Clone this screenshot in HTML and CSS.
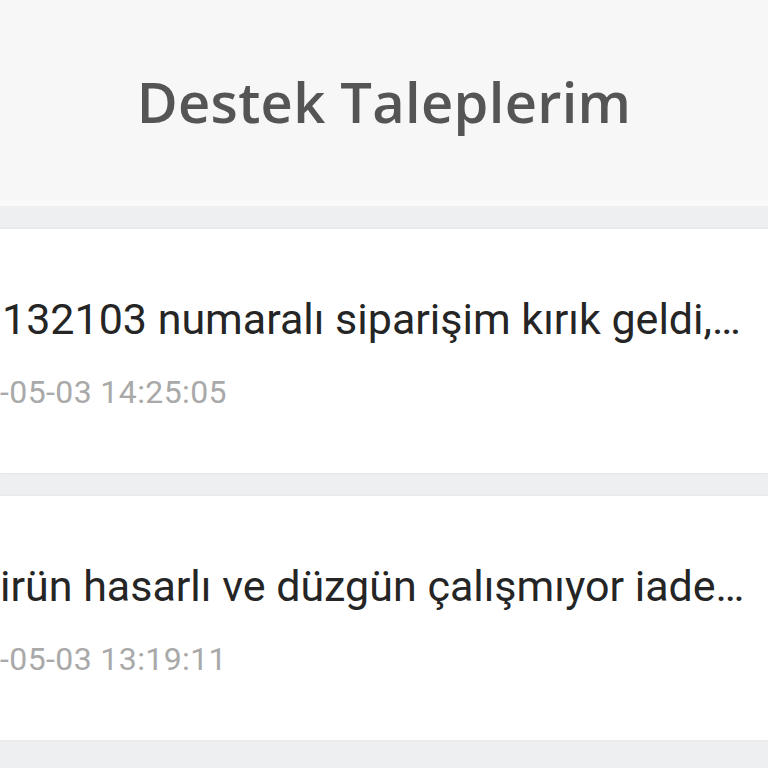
FILE: index.html
```html
<!DOCTYPE html>
<html lang="tr">
<head>
<meta charset="utf-8">
<title>Destek Taleplerim</title>
<link rel="stylesheet" href="styles.css">
</head>
<body>
<header class="topbar">
  <h1 class="topbar-title">Destek Taleplerim</h1>
</header>
<main class="list">
  <article class="ticket">
    <div class="ticket-subject">132103 numaralı siparişim kırık geldi,…</div>
    <div class="ticket-date">-05-03 14:25:05</div>
  </article>
  <article class="ticket">
    <div class="ticket-subject subject-cut">irün hasarlı ve düzgün çalışmıyor iade…</div>
    <div class="ticket-date">-05-03 13:19:11</div>
  </article>
</main>
</body>
</html>
```

FILE: styles.css
```css
html, body {
  margin: 0;
  padding: 0;
}
body {
  width: 768px;
  height: 768px;
  overflow: hidden;
  background: #eeeff1;
  font-family: Roboto, "Liberation Sans", sans-serif;
}
.topbar {
  height: 200px;
  background: #f7f7f7;
  border-bottom: 6px solid #f9f9f9;
  display: flex;
  justify-content: center;
}
.topbar-title {
  margin: 0;
  padding-top: 65px;
  font-family: "Open Sans", "Liberation Sans", sans-serif;
  font-weight: 600;
  font-size: 56px;
  line-height: 72px;
  color: #555555;
  letter-spacing: 0.3px;
}
.list {
  display: flex;
  flex-direction: column;
  gap: 23px;
  padding-top: 23px;
}
.ticket {
  background: #ffffff;
  height: 244px;
  box-sizing: border-box;
  padding-top: 66px;
  box-shadow: 0 0 3px rgba(0, 0, 0, 0.07);
}
.ticket-subject {
  font-size: 43px;
  line-height: 48px;
  color: #252525;
  white-space: nowrap;
  margin-left: 2px;
}
.subject-cut {
  margin-left: 0;
}
.ticket-date {
  margin-top: 31px;
  font-size: 32px;
  line-height: 36px;
  letter-spacing: 0.4px;
  color: #a9a9a9;
  white-space: nowrap;
  margin-left: 0;
}
```
